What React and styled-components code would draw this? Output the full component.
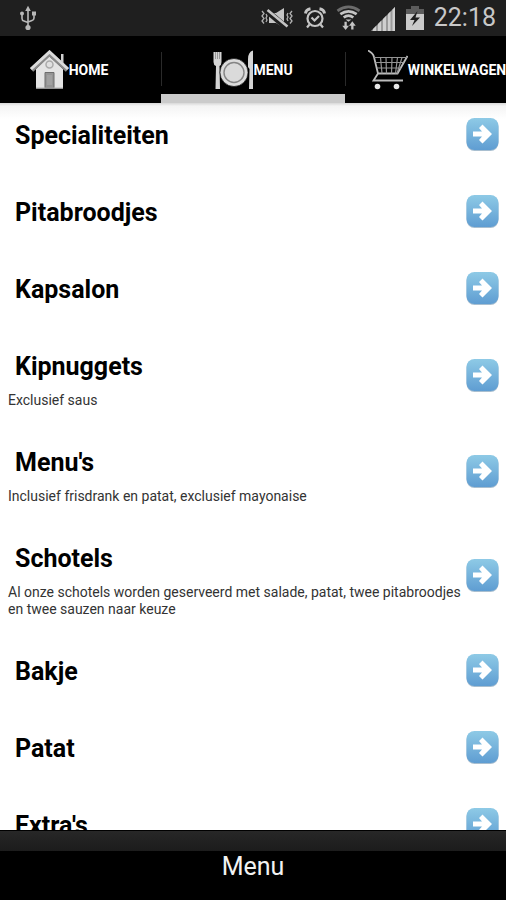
import React from "react";
import styled, { createGlobalStyle } from "styled-components";

const GlobalStyle = createGlobalStyle`
  * {
    box-sizing: border-box;
    margin: 0;
    padding: 0;
  }
  body {
    background-color: #fff;
    font-family: Roboto, "Liberation Sans", sans-serif;
  }
`;

const Container = styled.div`
  display: flex;
  flex-direction: column;
  height: 100vh;
  overflow: hidden;
`;

const StatusBar = styled.header`
  display: flex;
  flex-shrink: 0;
  align-items: center;
  justify-content: space-between;
  height: 36px;
  padding: 0 10px 0 18px;
  background-color: #1f1f1f;
  color: #c8c8c8;
`;
const StatusIcons = styled.div`
  display: flex;
  align-items: center;
  gap: 10px;
`;
const Clock = styled.time`
  font-size: 25px;
  line-height: 36px;
`;

const Tabs = styled.nav`
  display: flex;
  flex-shrink: 0;
  justify-content: center;
  height: 67px;
  overflow: hidden;
  background-color: #000;
`;
const Tab = styled.a`
  display: flex;
  flex: 0 0 184px;
  align-items: center;
  justify-content: center;
  border-bottom: 9px solid ${(props) => (props.$active ? "#cbcbcb" : "#000")};
  padding-top: 9px;
  color: #fff;
  font-size: 14px;
  font-weight: 700;
  text-decoration: none;
`;
const Divider = styled.span`
  flex: 0 0 1px;
  height: 34px;
  margin: 16px -1px 0 0;
  background-color: #2a2a2a;
`;

const List = styled.ul`
  display: flex;
  flex: 1;
  flex-direction: column;
  gap: 16px;
  min-height: 0;
  padding-top: 1px;
  overflow: hidden;
  list-style: none;
  background: linear-gradient(#d8d8d8, #f4f4f4 3px, #fff 16px) no-repeat;
`;
const Row = styled.a`
  display: flex;
  align-items: center;
  justify-content: space-between;
  gap: 2px;
  padding: 0 7px 0 8px;
  color: #000;
  text-decoration: none;
`;
const RowText = styled.div`
  padding: 16px 0 6px;
`;
const RowTitle = styled.h2`
  padding: 0 0 7px 7px;
  font-size: 25px;
  font-weight: 700;
  line-height: 32px;
`;
const RowDesc = styled.p`
  margin-top: 2px;
  color: #333;
  font-size: 14px;
  font-weight: 400;
  line-height: 17px;
`;

const Footer = styled.footer`
  flex-shrink: 0;
  border-top: 1px solid #000;
  background-color: #000;
`;
const FooterStrip = styled.div`
  height: 20px;
  background: linear-gradient(#272727, #1c1c1c);
`;
const FooterButton = styled.button`
  display: block;
  width: 100%;
  padding-bottom: 17px;
  border: 0;
  background-color: #000;
  color: #f2f2f2;
  font-family: inherit;
  font-size: 25px;
  line-height: 32px;
`;

const Icon = styled.svg`
  display: block;
  flex-shrink: 0;
`;

function UsbIcon() {
  return (
    <Icon width="20" height="26" viewBox="0 0 20 26" fill="none" stroke="#b8b8b8" strokeWidth="1.6">
      <path d="M10 5v17M4 9v4.5q0 2 2 2.6l4 1.4M16 9v4q0 2-2 2.6l-4 1.4" />
      <path d="M10 0.8L12.8 6H7.2z" fill="#b8b8b8" stroke="none" />
      <circle cx="4" cy="8.5" r="2" fill="#b8b8b8" stroke="none" />
      <rect x="14" y="6.5" width="4" height="4" fill="#b8b8b8" stroke="none" />
      <circle cx="10" cy="22.5" r="2.6" fill="#b8b8b8" stroke="none" />
    </Icon>
  );
}

function MuteIcon() {
  return (
    <Icon width="33" height="22" viewBox="0 0 33 22" fill="#c4c4c4">
      <path d="M8 6h7l8-5v20l-8-5H8z" />
      <path d="M6 4L26 21" stroke="#1f1f1f" strokeWidth="6" />
      <path d="M6.5 3L26.5 19.5" stroke="#c4c4c4" strokeWidth="2.6" />
      <path
        d="M1 4l2 2.5-2 2.5 2 2.5-2 2.5 2 2.5M5 7l1 2-1 2 1 2-1 2M31 4l-2 2.5 2 2.5-2 2.5 2 2.5-2 2.5M27 6l-1 2 1 2-1 2 1 2"
        fill="none"
        stroke="#b0b0b0"
        strokeWidth="1.3"
      />
    </Icon>
  );
}

function AlarmIcon() {
  return (
    <Icon width="22" height="22" viewBox="0 0 22 22" fill="none" stroke="#c4c4c4" strokeWidth="2.2">
      <circle cx="11" cy="11.5" r="7.5" />
      <path d="M7.5 10.5l3 3 4.500-4.500M5.500 17.500L3 20.500M16.500 17.500l2.500 3" />
      <path d="M1.500 6.500Q2 2.500 6.500 1.800M20.500 6.500Q20 2.500 15.500 1.800" strokeWidth="3" />
    </Icon>
  );
}

function WifiIcon() {
  return (
    <Icon width="25" height="26" viewBox="0 0 26 26" fill="none" strokeWidth="2.8">
      <path d="M1.500 5.500Q13 -2.500 24.500 5.500" stroke="#6c6c6c" />
      <path d="M4.500 9Q13 3 21.500 9M8 12.500Q13 8.500 18 12.500" stroke="#c4c4c4" />
      <path d="M10 14.500h6L13 17z" fill="#c4c4c4" />
      <path d="M10 17v5M17 25v-5" stroke="#c4c4c4" strokeWidth="2.400" />
      <path d="M6.500 21h7L10 25.500zM13.500 21h7L17 16.500z" fill="#c4c4c4" />
    </Icon>
  );
}

function SignalIcon() {
  return (
    <Icon width="25" height="25" viewBox="0 0 25 25">
      <path d="M0 25L24 1v24z" fill="#9a9a9a" />
      <path d="M2 25v-2l3-3v5zM7 25v-7l3-3v10zM12 25V13l3-3v15zM17 25V8l2.500-2.500V25zM21.500 25V3.500L24 1v24z" fill="#cfcfcf" />
    </Icon>
  );
}

function BatteryIcon() {
  return (
    <Icon width="18" height="24" viewBox="0 0 18 24">
      <path d="M5 0h8v3h5v6H0V3h5z" fill="#5c5c5c" />
      <path d="M0 8h18v16H0z" fill="#cacaca" />
      <path d="M11.500 5L4 14h4.500L6 20l8-8.500H9.500z" fill="#1f1f1f" />
    </Icon>
  );
}

function HomeIcon() {
  return (
    <Icon width="39" height="40" viewBox="0 0 39 40">
      <path d="M31 4h2.500v12H31z" fill="#d0d0d0" />
      <path d="M6 19L19 6 33 19v19.500H6z" fill="#e4e4e4" />
      <path d="M1.500 20L19.500 3.500 37.500 20" fill="none" stroke="#8a8a8a" strokeWidth="5" />
      <path d="M1 19L19.500 2 38 19" fill="none" stroke="#dcdcdc" strokeWidth="3" />
      <circle cx="19.500" cy="14.500" r="3.500" fill="#e0e0e0" stroke="#aaa" strokeWidth="1.500" />
      <path d="M15 22.500h9V38h-9z" fill="#949494" stroke="#6c6c6c" />
      <path d="M17 25h5v10h-5z" fill="#a0a0a0" />
      <path d="M6 38h27" stroke="#b4b4b4" />
    </Icon>
  );
}

function PlateIcon() {
  return (
    <Icon width="40" height="40" viewBox="0 0 40 40">
      <path d="M0.500 2H8.500v10q0 3-2 4l0.500 23H2.500L3 16Q0.500 15 0.500 12z" fill="#d4d4d4" />
      <path d="M2.500 2v7M4.500 2v7M6.500 2v7" stroke="#888" strokeWidth="0.800" />
      <path d="M40 0.500V39h-4l0.500-20-1.500-2V9q0-7 5-8.500z" fill="#d4d4d4" />
      <circle cx="21" cy="22.500" r="14" fill="#dcdcdc" stroke="#000" strokeWidth="0.600" />
      <circle cx="21" cy="22.500" r="10" fill="#dadada" stroke="#858585" strokeWidth="1.400" />
    </Icon>
  );
}

function CartIcon() {
  return (
    <Icon width="40" height="40" viewBox="0 0 40 40" fill="none" stroke="#bcbcbc" strokeWidth="1.800">
      <path d="M0 0.500Q5 3 6 7L10 23.500H29.500L39.500 6M10 23.500L5.500 30.500H35" />
      <path
        d="M6 7.500h33M7.500 12.500h28M9 18h24M12.500 7.500l1.500 16M18 7.500l0.500 16M24 7.500l-0.500 16M29.500 7.500l-2 16M34 7.500l-5 16"
        strokeWidth="1.200"
        stroke="#949494"
      />
      <circle cx="9.500" cy="36.500" r="2.800" fill="#e8e8e8" stroke="none" />
      <circle cx="28.500" cy="36.500" r="2.800" fill="#e8e8e8" stroke="none" />
    </Icon>
  );
}

function ArrowIcon() {
  return (
    <Icon width="33" height="33" viewBox="0 0 33 33">
      <defs>
        <linearGradient id="arrowFill" x1="0" y1="0" x2="0" y2="1">
          <stop offset="0" stopColor="#8ecae6" />
          <stop offset="1" stopColor="#5f9dd2" />
        </linearGradient>
      </defs>
      <rect x="0.500" y="1" width="32" height="32" rx="8" fill="#a9bfd0" />
      <rect x="0.500" y="0" width="32" height="32" rx="8" fill="url(#arrowFill)" />
      <path d="M7 13.500h9l-3-3.500 3.500-3.500L26 16l-9.500 9.500L13 22l3-3.500H7z" fill="#fff" />
    </Icon>
  );
}

const tabs = [
  { label: "HOME", icon: HomeIcon },
  { label: "MENU", icon: PlateIcon, active: true },
  { label: "WINKELWAGEN", icon: CartIcon },
];

const categories = [
  { title: "Specialiteiten" },
  { title: "Pitabroodjes" },
  { title: "Kapsalon" },
  { title: "Kipnuggets", desc: "Exclusief saus" },
  { title: "Menu's", desc: "Inclusief frisdrank en patat, exclusief mayonaise" },
  {
    title: "Schotels",
    desc: "Al onze schotels worden geserveerd met salade, patat, twee pitabroodjes en twee sauzen naar keuze",
  },
  { title: "Bakje" },
  { title: "Patat" },
  { title: "Extra's" },
];

function App() {
  return (
    <Container>
      <GlobalStyle />
      <StatusBar>
        <UsbIcon />
        <StatusIcons>
          <MuteIcon />
          <AlarmIcon />
          <WifiIcon />
          <SignalIcon />
          <BatteryIcon />
          <Clock>22:18</Clock>
        </StatusIcons>
      </StatusBar>
      <Tabs>
        {tabs.map(({ label, icon: TabIcon, active }, index) => (
          <React.Fragment key={label}>
            {index > 0 && <Divider />}
            <Tab href="#" $active={active} aria-current={active ? "page" : undefined}>
              <TabIcon />
              {label}
            </Tab>
          </React.Fragment>
        ))}
      </Tabs>
      <List>
        {categories.map(({ title, desc }) => (
          <li key={title}>
            <Row href="#">
              <RowText>
                <RowTitle>{title}</RowTitle>
                {desc && <RowDesc>{desc}</RowDesc>}
              </RowText>
              <ArrowIcon />
            </Row>
          </li>
        ))}
      </List>
      <Footer>
        <FooterStrip />
        <FooterButton type="button">Menu</FooterButton>
      </Footer>
    </Container>
  );
}

export default App;
